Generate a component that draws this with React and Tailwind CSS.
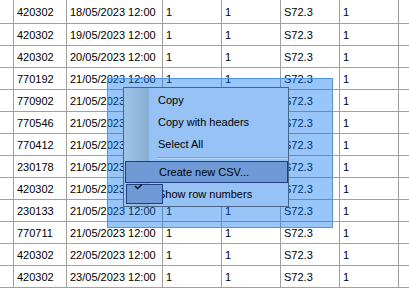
import React from 'react';

const rows = [
  ['420302', '18/05/2023 12:00'],
  ['420302', '19/05/2023 12:00'],
  ['420302', '20/05/2023 12:00'],
  ['770192', '21/05/2023 12:00'],
  ['770902', '21/05/2023 12:00'],
  ['770546', '21/05/2023 12:00'],
  ['770412', '21/05/2023 12:00'],
  ['230178', '21/05/2023 12:00'],
  ['420302', '21/05/2023 12:00'],
  ['230133', '21/05/2023 12:00'],
  ['770711', '21/05/2023 12:00'],
  ['420302', '22/05/2023 12:00'],
  ['420302', '23/05/2023 12:00'],
];

const cell = 'shrink-0 h-full border-r border-[#a0a0a0] pl-[3px] pt-[2px] flex items-center whitespace-nowrap';

// cells of rows 4-8 in the two middle "1" columns sit fully under the menu
const GridRow = ({ id, date, first, hidden }) => (
  <div className={`flex border-b border-[#a0a0a0] ${first ? 'h-[24px]' : 'h-[22px]'}`}>
    <div className={`${cell} w-[14px]`}></div>
    <div className={`${cell} w-[53px]`}>{id}</div>
    <div className={`${cell} w-[96px]`}>{date}</div>
    <div className={`${cell} w-[59px]`}>{hidden ? '' : '1'}</div>
    <div className={`${cell} w-[59px]`}>{hidden ? '' : '1'}</div>
    <div className={`${cell} w-[59px]`}>S72.3</div>
    <div className={`${cell} w-[59px]`}>1</div>
    <div className="flex-1"></div>
  </div>
);

const MenuItem = ({ children, active, checked }) => (
  <div className="relative h-[22px] pl-[1px] flex">
    <div
      className={`relative flex-1 flex items-center pl-[33px] ${
        active ? 'bg-[#6f9ad6] border border-[#1f3f7f] pl-[32px]' : ''
      }`}
    >
      {children}
    </div>
    {checked && (
      <div className="absolute left-[2px] top-[1px] w-[37px] h-[20px] bg-[#6f9ad6] border border-[#1f3f7f]">
        <svg className="absolute left-[7px] top-[-1px]" width="9" height="6" viewBox="0 0 9 6">
          <polyline points="1,2 3.5,4.5 8,0.5" fill="none" stroke="#111" strokeWidth="1.4" />
        </svg>
      </div>
    )}
  </div>
);

export default function App() {
  return (
    <div
      className="relative w-[409px] h-[288px] overflow-hidden bg-white text-black text-[11px]"
      style={{ fontFamily: '"Liberation Sans", Arial, sans-serif' }}
    >
      <div className="flex flex-col">
        {rows.map((r, i) => (
          <GridRow key={i} id={r[0]} date={r[1]} first={i === 0} hidden={i >= 4 && i <= 8} />
        ))}
      </div>

      {/* drag selection marquee */}
      <div className="absolute left-[107px] top-[78px] w-[226px] h-[150px] bg-[#0070f0]/40 border border-[#4f95ef]"></div>

      {/* context menu */}
      <div className="absolute left-[123px] top-[87px] w-[166px] h-[120px] bg-[#96c2f5] border border-[#4a6485] py-[1px]">
        <div className="absolute left-0 top-0 bottom-0 w-[25px] bg-gradient-to-r from-[#9fc4e8] to-[#88aed3]"></div>
        <div className="relative">
          <MenuItem>Copy</MenuItem>
          <MenuItem>Copy with headers</MenuItem>
          <MenuItem>Select All</MenuItem>
          <div className="h-[6px] pl-[33px] pt-[2px]">
            <div className="h-[1px] bg-[#7ea3cc]"></div>
            <div className="h-[1px] bg-[#b4d4f8]"></div>
          </div>
          <MenuItem active>Create new CSV...</MenuItem>
          <MenuItem checked>Show row numbers</MenuItem>
        </div>
      </div>
    </div>
  );
}
